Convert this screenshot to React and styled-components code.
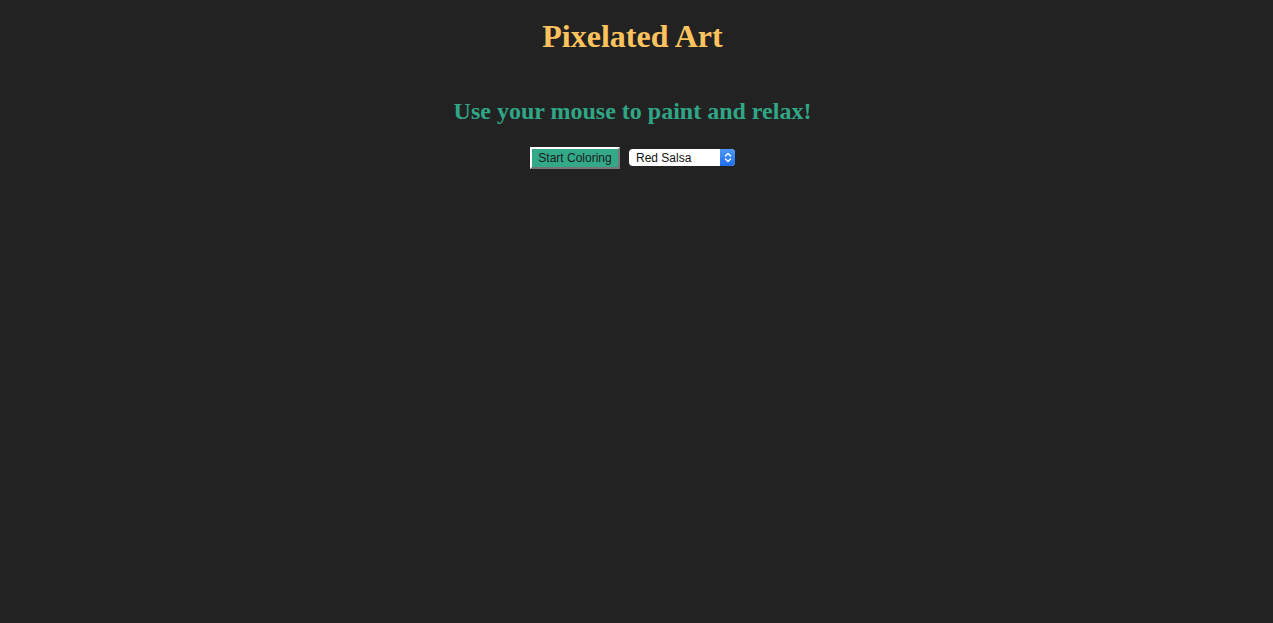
import React, { useState } from 'react';
import styled, { createGlobalStyle } from 'styled-components';

const GlobalStyle = createGlobalStyle`
  html, body {
    margin: 0;
    padding: 0;
    background: #222222;
  }
  body {
    min-height: 100vh;
  }
`;

const Page = styled.main`
  display: flex;
  flex-direction: column;
  align-items: center;
  padding: 18px 8px 0 0;
  min-height: 100vh;
  box-sizing: border-box;
  background: #222222;
  font-family: "Liberation Serif", "Times New Roman", serif;
`;

const Title = styled.h1`
  margin: 0;
  font-size: 32px;
  line-height: 36px;
  font-weight: bold;
  color: #fdc35e;
`;

const Subtitle = styled.h2`
  margin: 43px 0 0;
  font-size: 24px;
  line-height: 28px;
  font-weight: bold;
  color: #31a686;
`;

const Controls = styled.div`
  display: flex;
  align-items: flex-start;
  gap: 9px;
  margin-top: 22px;
`;

const StartButton = styled.button`
  height: 22px;
  width: 90px;
  padding: 0;
  box-sizing: border-box;
  border: 2px solid;
  border-color: #ffffff #767676 #767676 #ffffff;
  background: #33a98a;
  color: #1b1b1b;
  font-family: "Liberation Sans", Arial, sans-serif;
  font-size: 12px;
  cursor: pointer;
`;

const SelectWrap = styled.div`
  position: relative;
  width: 106px;
  height: 17px;
  margin-top: 2px;
`;

const Select = styled.select`
  appearance: none;
  -webkit-appearance: none;
  display: block;
  width: 100%;
  height: 100%;
  box-sizing: border-box;
  border: none;
  border-radius: 4px;
  background: #ffffff;
  color: #111111;
  padding: 0 18px 0 7px;
  font-family: "Liberation Sans", Arial, sans-serif;
  font-size: 12px;
  outline: none;
`;

const Arrow = styled.span`
  position: absolute;
  top: 0;
  right: 0;
  width: 15px;
  height: 17px;
  border-radius: 0 4px 4px 0;
  background: linear-gradient(#4d97fb, #1e6ff0);
  display: flex;
  align-items: center;
  justify-content: center;
  pointer-events: none;
`;

const colors = ['Red Salsa', 'Orange Peel', 'Maize Crayola', 'Pistachio', 'Zomp', 'CG Blue'];

export default function App() {
  const [color, setColor] = useState(colors[0]);
  return (
    <>
      <GlobalStyle />
      <Page>
        <Title>Pixelated Art</Title>
        <Subtitle>Use your mouse to paint and relax!</Subtitle>
        <Controls>
          <StartButton>Start Coloring</StartButton>
          <SelectWrap>
            <Select value={color} onChange={e => setColor(e.target.value)}>
              {colors.map(c => <option key={c}>{c}</option>)}
            </Select>
            <Arrow>
              <svg width="8" height="11" viewBox="0 0 8 11" fill="none" stroke="#fff" strokeWidth="1.4" strokeLinecap="round" strokeLinejoin="round">
                <path d="M1.5 4 L4 1.5 L6.5 4" />
                <path d="M1.5 7 L4 9.5 L6.5 7" />
              </svg>
            </Arrow>
          </SelectWrap>
        </Controls>
      </Page>
    </>
  );
}
